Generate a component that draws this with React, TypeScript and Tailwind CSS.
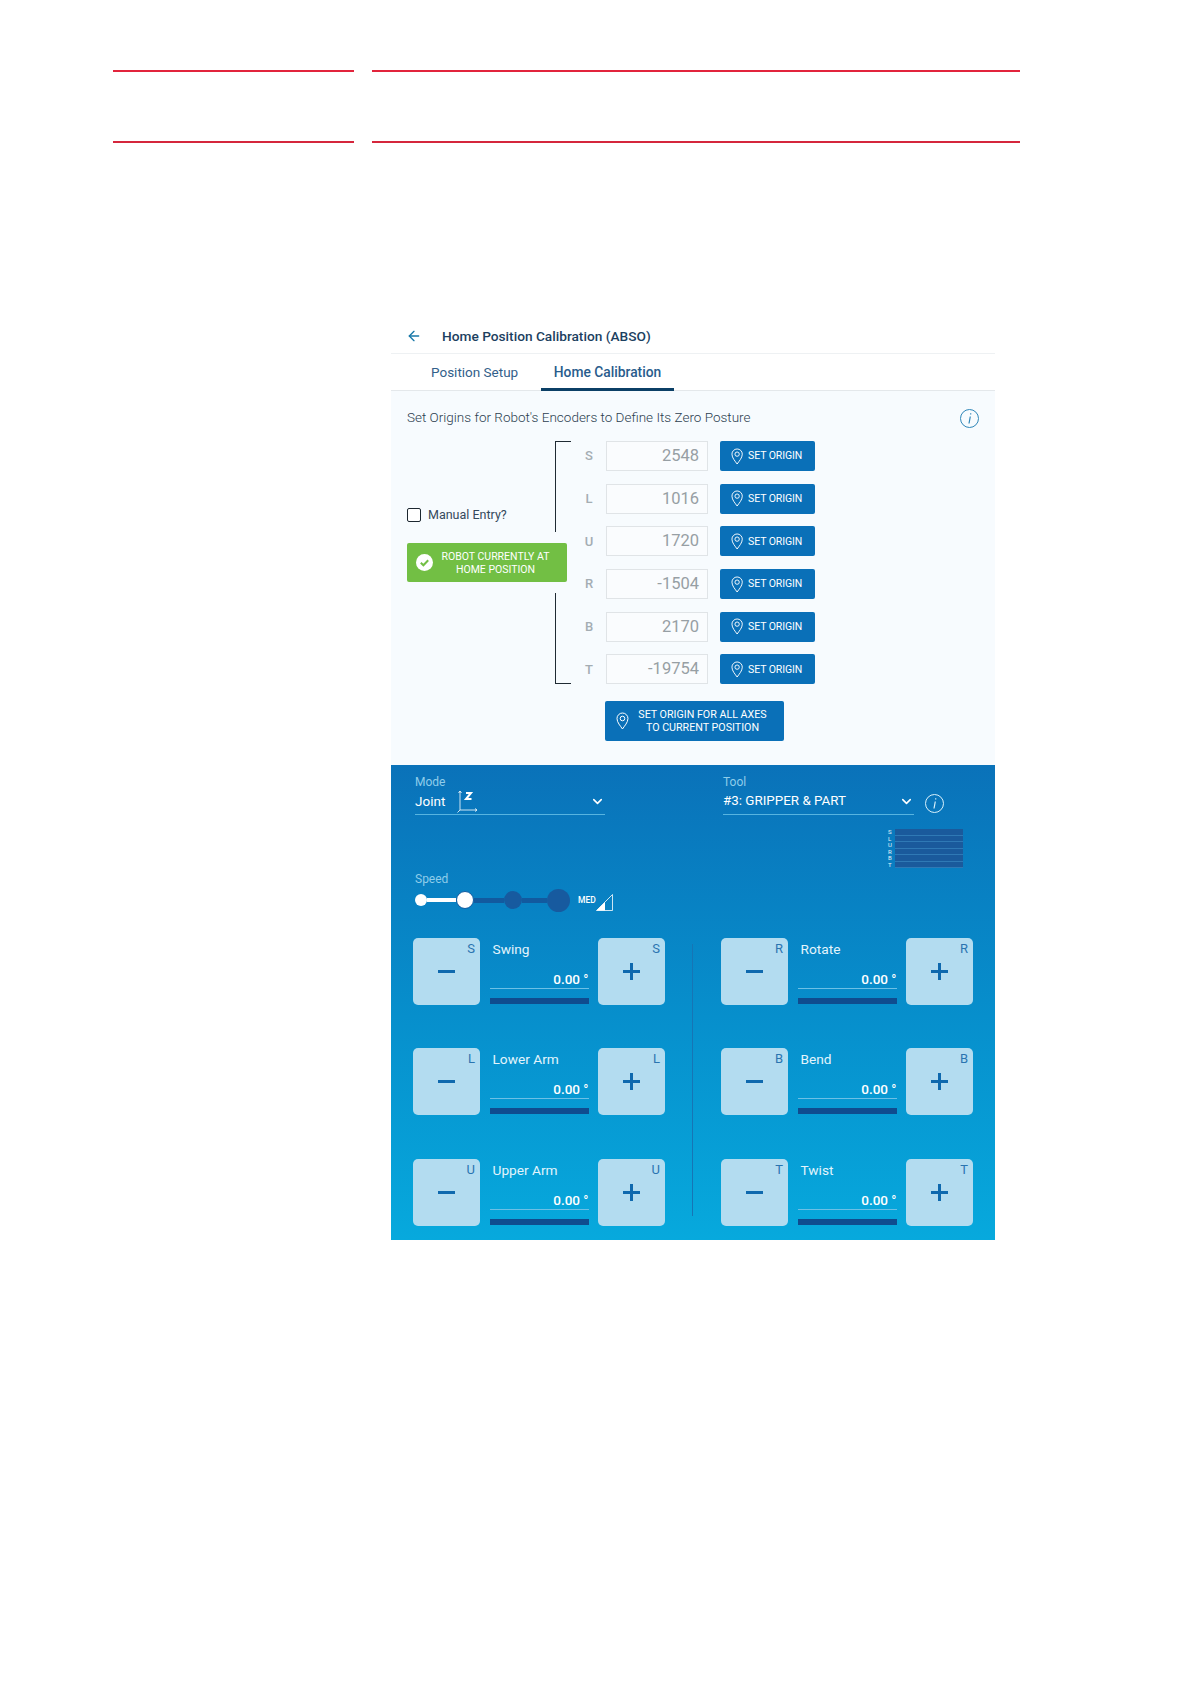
import React from 'react';
import { ArrowLeft, ChevronDown } from 'lucide-react';

const origins = [
  { axis: 'S', value: '2548' },
  { axis: 'L', value: '1016' },
  { axis: 'U', value: '1720' },
  { axis: 'R', value: '-1504' },
  { axis: 'B', value: '2170' },
  { axis: 'T', value: '-19754' },
];

const leftJog = [
  { axis: 'S', name: 'Swing' },
  { axis: 'L', name: 'Lower Arm' },
  { axis: 'U', name: 'Upper Arm' },
];

const rightJog = [
  { axis: 'R', name: 'Rotate' },
  { axis: 'B', name: 'Bend' },
  { axis: 'T', name: 'Twist' },
];

function InfoIcon({ color }: { color: string }) {
  return (
    <svg width="19" height="19" viewBox="0 0 19 19" fill="none" stroke={color} strokeWidth="1">
      <circle cx="9.5" cy="9.5" r="9" />
      <path d="M10.300 7.500l-1.300 7M10.700 4.300v1.200" strokeWidth="1.200" />
    </svg>
  );
}

function PinIcon({ size }: { size: number }) {
  return (
    <svg width={size * 0.72} height={size} viewBox="0 0 13 18" fill="none" stroke="#fff" strokeWidth="1" className="shrink-0">
      <path d="M6.500 17C4.500 14 1 10.500 1 6.500a5.500 5.500 0 0 1 11 0C12 10.500 8.500 14 6.500 17Z" />
      <circle cx="6.500" cy="6.500" r="2.300" />
    </svg>
  );
}

function OriginButton() {
  return (
    <button className="w-[95px] h-[30px] ml-3 pr-[2px] rounded-[2px] bg-[#0a70b8] text-white flex items-center justify-center gap-[5px] text-[10.5px] tracking-[-0.1px]">
      <PinIcon size={17} />
      SET ORIGIN
    </button>
  );
}

function JogButton({ axis, sign }: { axis: string; sign: '-' | '+' }) {
  return (
    <div className="relative w-[67px] h-[67px] rounded-[5px] bg-[#b3dcf0] flex items-center justify-center shrink-0">
      <span className="absolute top-[3px] right-[5px] text-[13px] leading-[16px] text-[#2a74b0]">{axis}</span>
      {sign === '-' ? (
        <div className="w-[17px] h-[3px] bg-[#0f69ae]" />
      ) : (
        <svg width="17" height="17" viewBox="0 0 17 17" fill="#0f69ae">
          <rect x="0" y="7" width="17" height="3" />
          <rect x="7" y="0" width="3" height="17" />
        </svg>
      )}
    </div>
  );
}

function JogRow({ axis, name }: { axis: string; name: string }) {
  return (
    <div className="flex justify-between h-[67px]">
      <JogButton axis={axis} sign="-" />
      <div className="w-[99px] flex flex-col text-white">
        <div className="pl-[3px] pt-[2px] text-[13.7px] leading-[18px] h-[26px] text-[#e3f4fc]">{name}</div>
        <div className="text-right text-[13.5px] leading-[18px] font-medium border-b border-[#6cc0e6] h-[25px] pt-[6px]">0.00 °</div>
        <div className="h-[6px] mt-[9px] bg-[#0f4c8f]" />
      </div>
      <JogButton axis={axis} sign="+" />
    </div>
  );
}

function JogColumn({ rows }: { rows: { axis: string; name: string }[] }) {
  return (
    <div className="w-[252px] flex flex-col">
      <JogRow {...rows[0]} />
      <div className="mt-[43px]">
        <JogRow {...rows[1]} />
      </div>
      <div className="mt-[44px]">
        <JogRow {...rows[2]} />
      </div>
    </div>
  );
}

export default function App() {
  return (
    <div className="w-[1191px] h-[1684px] bg-white pt-[70px] overflow-hidden font-['Roboto',sans-serif]">
      <div className="flex">
        <div className="ml-[113px] w-[241px] h-[2px] bg-[#e2243c]" />
        <div className="ml-[18px] w-[648px] h-[2px] bg-[#e2243c]" />
      </div>
      <div className="flex mt-[69px]">
        <div className="ml-[113px] w-[241px] h-[2px] bg-[#d5263c]" />
        <div className="ml-[18px] w-[648px] h-[2px] bg-[#d5263c]" />
      </div>

      <div className="ml-[391px] mt-[175px] w-[604px]">
        {/* header */}
        <div className="h-[36px] border-b border-[#eef1f3] flex items-center pt-[1px]">
          <ArrowLeft size={16} strokeWidth={2} className="ml-[15px] text-[#1878a8]" />
          <span className="ml-[20px] text-[13.7px] font-medium text-[#1c3f5f]">Home Position Calibration (ABSO)</span>
        </div>

        {/* tabs */}
        <div className="h-[37px] border-b border-[#e4e8eb] flex">
          <div className="ml-[40px] w-[110px] text-[13.5px] leading-[36px] text-[#33608a]">Position Setup</div>
          <div className="w-[133px] h-[37px] border-b-[3px] border-[#0b3f66] text-center text-[13.8px] leading-[36px] font-medium text-[#285c8c]">
            Home Calibration
          </div>
        </div>

        {/* calibration */}
        <div className="h-[374px] bg-[#f7fbfe] px-4 pt-[16px]">
          <div className="flex justify-between items-center h-[20px]">
            <span className="text-[13.5px] font-light text-[#2c3e50]">Set Origins for Robot's Encoders to Define Its Zero Posture</span>
            <div className="mt-[2px]">
              <InfoIcon color="#2f86b8" />
            </div>
          </div>

          <div className="flex mt-[14px]">
            <div className="w-[160px] pt-[64px]">
              <label className="flex items-center h-[20px]">
                <span className="w-[14px] h-[14px] rounded-[2px] border border-[#1c2730] bg-white" />
                <span className="ml-[7px] text-[12.5px] text-[#35495c]">Manual Entry?</span>
              </label>
              <div className="mt-[18px] w-[160px] h-[39px] rounded-[2px] bg-[#72bf44] flex items-center text-white">
                <svg width="17" height="17" viewBox="0 0 17 17" className="ml-[9px] shrink-0">
                  <circle cx="8.500" cy="8.500" r="8.500" fill="#fff" />
                  <path d="M4.800 8.800l2.600 2.500 4.800-5" fill="none" stroke="#72bf44" strokeWidth="2" />
                </svg>
                <span className="flex-1 text-center text-[10.5px] leading-[13px] pr-[9px]">
                  ROBOT CURRENTLY AT
                  <br />
                  HOME POSITION
                </span>
              </div>
            </div>

            <div className="ml-[-12px] w-[16px] h-[243px] flex flex-col">
              <div className="h-[91px] border-l border-t border-[#1f2a33]" />
              <div className="h-[61px]" />
              <div className="h-[91px] border-l border-b border-[#1f2a33]" />
            </div>

            <div className="flex flex-col">
              {origins.map((o, i) => (
                <div key={o.axis} className={`flex items-center h-[30px] ${i > 0 ? 'mt-[12.7px]' : ''}`}>
                  <span className="w-[36px] text-center text-[13px] text-[#a4adb3] font-medium">{o.axis}</span>
                  <div className="w-[102px] h-[30px] -ml-px border border-[#e0e4e7] bg-white/40 text-right pr-[8px] text-[16.5px] leading-[28px] text-[#979fa4]">
                    {o.value}
                  </div>
                  <OriginButton />
                </div>
              ))}
              <button className="ml-[34px] mt-[17px] w-[179px] h-[40px] rounded-[2px] bg-[#0a70b8] text-white flex items-center">
                <div className="ml-[11px]">
                  <PinIcon size={18} />
                </div>
                <span className="flex-1 text-center text-[10.7px] leading-[13px] pr-[8px]">
                  SET ORIGIN FOR ALL AXES
                  <br />
                  TO CURRENT POSITION
                </span>
              </button>
            </div>
          </div>
        </div>

        {/* jog panel */}
        <div className="h-[475px] bg-linear-to-b from-[#0a72b9] to-[#07a9dd]">
          <div className="flex pt-[10px] pl-[24px]">
            <div className="w-[190px]">
              <div className="text-[12px] leading-[14px] text-[#8fcdea]">Mode</div>
              <div className="h-[25px] mt-[1px] pb-[2px] border-b border-[#57b4e0] flex items-center text-white text-[13.5px]">
                Joint
                <svg width="24" height="24" viewBox="0 0 24 24" className="ml-[11px] mt-[1px] text-white" fill="none" stroke="currentColor" strokeWidth="0.8">
                  <path d="M4 1v19M4 20l-2.500 2.500M4 20h17M21 20l-2-1.500M21 20l-2 1.500M4 1l-1.500 2M4 1l1.500 2" />
                  <path d="M10 3h5l-5 6h5.500" strokeWidth="2" />
                </svg>
                <ChevronDown size={15} strokeWidth={2.5} className="ml-auto" />
              </div>
            </div>
            <div className="ml-[118px] w-[191px]">
              <div className="text-[12px] leading-[14px] text-[#8fcdea]">Tool</div>
              <div className="h-[25px] mt-[1px] pb-[1px] border-b border-[#57b4e0] flex items-center text-white text-[13.4px]">
                #3: GRIPPER &amp; PART
                <ChevronDown size={15} strokeWidth={2.5} className="ml-auto" />
              </div>
            </div>
            <div className="ml-[11px] mt-[19px]">
              <InfoIcon color="#d8f0fb" />
            </div>
          </div>

          {/* mini axis chart */}
          <div className="flex flex-col w-[75px] ml-[497px] mt-[14px] h-[39px]">
            {origins.map((o) => (
              <div key={o.axis} className="flex items-center h-[6.500px]">
                <span className="w-[7px] text-[6px] leading-[6px] text-white/90">{o.axis}</span>
                <div className="w-[68px] h-full bg-[#1a5a9c] border-b border-[#3d8ec7]/60" />
              </div>
            ))}
          </div>

          {/* speed */}
          <div className="pl-[24px] mt-[4px] text-[12px] leading-[14px] text-[#8fcdea]">Speed</div>
          <div className="flex items-center pl-[24px] mt-[2px] h-[24px]">
            <div className="w-[12px] h-[12px] rounded-full bg-white" />
            <div className="w-[29px] h-[4px] bg-white" />
            <div className="w-[18px] h-[18px] rounded-full bg-white border border-[#0f5aa0]" />
            <div className="w-[30px] h-[5px] bg-[#125a9f]" />
            <div className="w-[18px] h-[18px] rounded-full bg-[#175a9f]" />
            <div className="w-[25px] h-[5px] bg-[#125a9f]" />
            <div className="w-[23px] h-[23px] rounded-full bg-[#175a9f]" />
            <span className="ml-[8px] text-[8.500px] font-medium text-white">MED</span>
            <svg width="17" height="17" viewBox="0 0 17 17" className="mt-[4px]">
              <path d="M0.500 16.500L16.500 0.500V16.500Z" fill="none" stroke="#fff" strokeWidth="0.800" />
              <path d="M0.500 16.500L9 8V16.500Z" fill="#fff" />
            </svg>
          </div>

          {/* jog rows */}
          <div className="flex pl-[22px] mt-[26px]">
            <JogColumn rows={leftJog} />
            <div className="ml-[27px] mr-[28px] mt-[6px] w-px h-[272px] bg-[#1675b5]" />
            <JogColumn rows={rightJog} />
          </div>
        </div>
      </div>
    </div>
  );
}
